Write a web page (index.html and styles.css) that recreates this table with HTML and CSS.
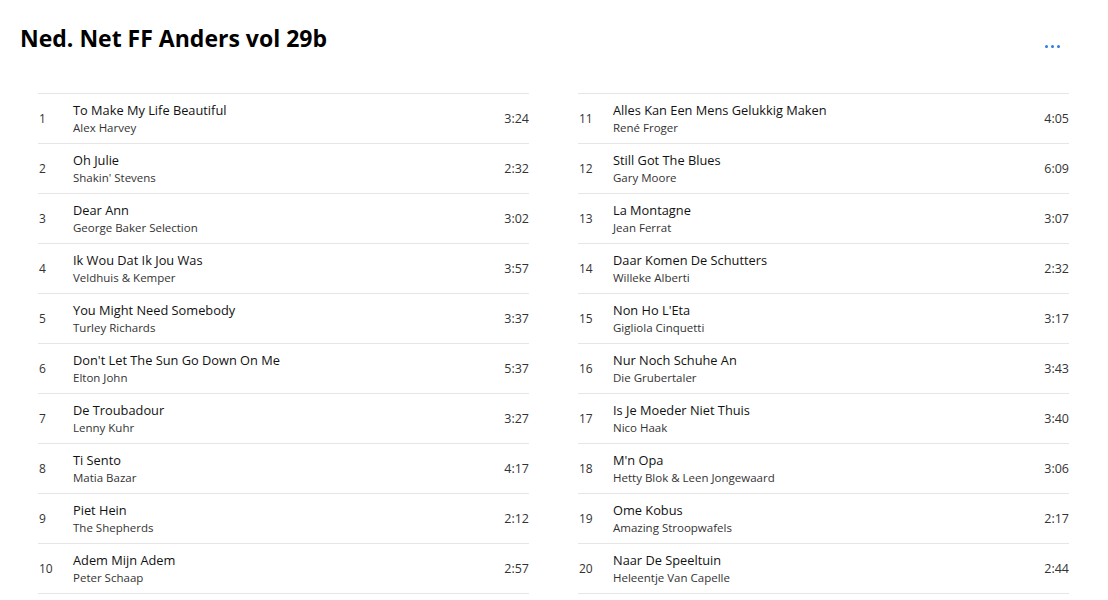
FILE: index.html
```html
<!DOCTYPE html>
<html>
<head>
<meta charset="utf-8">
<link rel="stylesheet" href="styles.css">
</head>
<body>
<header class="head">
  <h1 class="title">Ned. Net FF Anders vol 29b</h1>
  <button class="more" aria-label="More"><span></span><span></span><span></span></button>
</header>
<main class="tracks">
  <ol class="col">
    <li class="row"><span class="num">1</span><div class="info"><div class="name">To Make My Life Beautiful</div><div class="artist">Alex Harvey</div></div><span class="dur">3:24</span></li>
    <li class="row"><span class="num">2</span><div class="info"><div class="name">Oh Julie</div><div class="artist">Shakin' Stevens</div></div><span class="dur">2:32</span></li>
    <li class="row"><span class="num">3</span><div class="info"><div class="name">Dear Ann</div><div class="artist">George Baker Selection</div></div><span class="dur">3:02</span></li>
    <li class="row"><span class="num">4</span><div class="info"><div class="name">Ik Wou Dat Ik Jou Was</div><div class="artist">Veldhuis &amp; Kemper</div></div><span class="dur">3:57</span></li>
    <li class="row"><span class="num">5</span><div class="info"><div class="name">You Might Need Somebody</div><div class="artist">Turley Richards</div></div><span class="dur">3:37</span></li>
    <li class="row"><span class="num">6</span><div class="info"><div class="name">Don't Let The Sun Go Down On Me</div><div class="artist">Elton John</div></div><span class="dur">5:37</span></li>
    <li class="row"><span class="num">7</span><div class="info"><div class="name">De Troubadour</div><div class="artist">Lenny Kuhr</div></div><span class="dur">3:27</span></li>
    <li class="row"><span class="num">8</span><div class="info"><div class="name">Ti Sento</div><div class="artist">Matia Bazar</div></div><span class="dur">4:17</span></li>
    <li class="row"><span class="num">9</span><div class="info"><div class="name">Piet Hein</div><div class="artist">The Shepherds</div></div><span class="dur">2:12</span></li>
    <li class="row"><span class="num">10</span><div class="info"><div class="name">Adem Mijn Adem</div><div class="artist">Peter Schaap</div></div><span class="dur">2:57</span></li>
  </ol>
  <ol class="col">
    <li class="row"><span class="num">11</span><div class="info"><div class="name">Alles Kan Een Mens Gelukkig Maken</div><div class="artist">René Froger</div></div><span class="dur">4:05</span></li>
    <li class="row"><span class="num">12</span><div class="info"><div class="name">Still Got The Blues</div><div class="artist">Gary Moore</div></div><span class="dur">6:09</span></li>
    <li class="row"><span class="num">13</span><div class="info"><div class="name">La Montagne</div><div class="artist">Jean Ferrat</div></div><span class="dur">3:07</span></li>
    <li class="row"><span class="num">14</span><div class="info"><div class="name">Daar Komen De Schutters</div><div class="artist">Willeke Alberti</div></div><span class="dur">2:32</span></li>
    <li class="row"><span class="num">15</span><div class="info"><div class="name">Non Ho L'Eta</div><div class="artist">Gigliola Cinquetti</div></div><span class="dur">3:17</span></li>
    <li class="row"><span class="num">16</span><div class="info"><div class="name">Nur Noch Schuhe An</div><div class="artist">Die Grubertaler</div></div><span class="dur">3:43</span></li>
    <li class="row"><span class="num">17</span><div class="info"><div class="name">Is Je Moeder Niet Thuis</div><div class="artist">Nico Haak</div></div><span class="dur">3:40</span></li>
    <li class="row"><span class="num">18</span><div class="info"><div class="name">M'n Opa</div><div class="artist">Hetty Blok &amp; Leen Jongewaard</div></div><span class="dur">3:06</span></li>
    <li class="row"><span class="num">19</span><div class="info"><div class="name">Ome Kobus</div><div class="artist">Amazing Stroopwafels</div></div><span class="dur">2:17</span></li>
    <li class="row"><span class="num">20</span><div class="info"><div class="name">Naar De Speeltuin</div><div class="artist">Heleentje Van Capelle</div></div><span class="dur">2:44</span></li>
  </ol>
</main>
</body>
</html>
```
FILE: styles.css
```css
* { box-sizing: border-box; }
html, body { margin: 0; padding: 0; background: #fff; }
body {
  font-family: "Open Sans", "Noto Sans", sans-serif;
  color: #111;
}
.head {
  display: flex;
  justify-content: space-between;
  align-items: flex-start;
  padding: 22px 38px 0 20px;
  height: 93px;
}
.title {
  margin: 0;
  font-size: 23px;
  font-weight: 700;
  line-height: 32px;
  color: #000;
}
.more {
  display: flex;
  gap: 3px;
  margin-top: 23px;
  margin-right: 10px;
  padding: 0;
  border: 0;
  background: none;
}
.more span {
  width: 3px;
  height: 3px;
  border-radius: 50%;
  background: #2b7de0;
}
.tracks {
  display: grid;
  grid-template-columns: 491px 491px;
  column-gap: 49px;
  padding-left: 38px;
}
.col {
  list-style: none;
  margin: 0;
  padding: 0;
  border-bottom: 1px solid #e6e6e6;
}
.row {
  display: flex;
  align-items: center;
  height: 50px;
  border-top: 1px solid #e6e6e6;
}
.num {
  width: 35px;
  padding-left: 1px;
  font-size: 12px;
  color: #333;
}
.info {
  flex: 1;
  display: flex;
  flex-direction: column;
}
.name {
  font-size: 12.8px;
  line-height: 18px;
  color: #111;
}
.artist {
  font-size: 11.5px;
  line-height: 17px;
  color: #333;
}
.dur {
  font-size: 12.5px;
  color: #333;
}
```
